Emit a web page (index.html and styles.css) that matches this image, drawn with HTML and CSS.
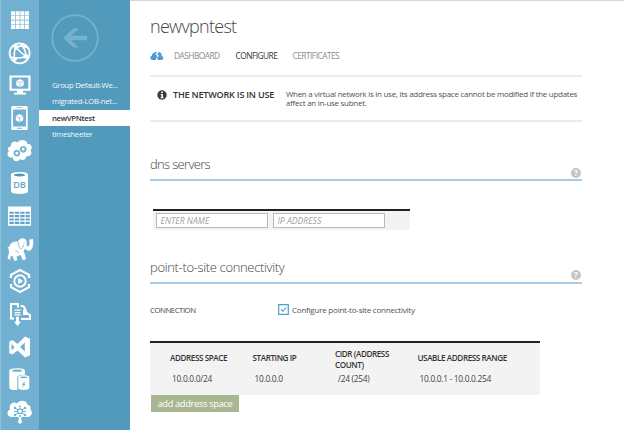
FILE: index.html
```html
<!DOCTYPE html>
<html lang="en">
<head>
<meta charset="utf-8">
<title>newvpntest</title>
<link rel="stylesheet" href="styles.css">
</head>
<body>
<div class="app">
  <nav class="rail">
    <svg viewBox="0 0 28 28"><path fill="none" stroke="#fff" stroke-width="4" stroke-dasharray="4 .65" d="M5 7.2h18M5 11.8h18M5 16.4h18M5 21h18"/></svg>
    <svg viewBox="0 0 28 28"><g fill="none" stroke="#fff"><circle cx="13.6" cy="14.3" r="10" stroke-width="1.8"/><path stroke-width="1.5" d="M10 8.5Q15 14 20 17.500M10 8.500Q7 14 9 21.500M4 18Q14 20 20 17.500M10 8.500Q16 5 21 9M20 17.500Q20 11 15 5"/></g><g fill="#fff"><circle cx="10" cy="8.500" r="2.400"/><circle cx="19.800" cy="17.500" r="2.400"/><circle cx="9" cy="20" r="2"/></g></svg>
    <svg viewBox="0 0 28 28"><path fill="#fff" fill-rule="evenodd" d="M3.500 4.500h21v15.300h-21zM5.700 6.500v11.200h16.600V6.500zM11 19.800h6v1.900h3v1.800H8v-1.800h3z"/><path fill="#fff" d="m14 8 3.700 1.900v4.400L14 16.300l-3.700-2V9.900z"/><path fill="none" stroke="#72b0d1" stroke-width=".6" d="m10.700 10.200 3.300 1.700 3.300-1.700M14 12v4"/></svg>
    <svg viewBox="0 0 28 28"><path fill="#fff" fill-rule="evenodd" d="M6.500 2h14q1.200 0 1.200 1.200v21.600q0 1.200-1.200 1.200h-14q-1.200 0-1.200-1.200V3.200Q5.300 2 6.500 2zM7 5.500v17h13v-17zM10.500 3.200v.8h6v-.8zM11 23.800v.9h5v-.9z"/><path fill="#fff" d="m13.500 10 3.700 1.900v4.400l-3.700 2-3.700-2v-4.400z"/><path fill="none" stroke="#72b0d1" stroke-width=".6" d="m10.200 12.200 3.300 1.700 3.300-1.700M13.500 14v4"/></svg>
    <svg viewBox="0 0 28 28"><path fill="#fff" d="M5 9.500C4 5 9 3 11.500 5.500 14 1.500 21 2.500 21.500 7c4-.5 5.500 4 3 6.300 2.500 3.200-.5 6.700-4 5.700-.5 4-4.500 5-6.500 3-2.500 4-7.500 2-7-1.500C2 21.500-.2 16.500 3 14c-2.500-1.500-.5-5 2-4.500z"/><g fill="none" stroke="#72b0d1"><circle cx="10.800" cy="16.200" r="2.300" stroke-width="1.700"/><circle cx="17.200" cy="12.300" r="2.300" stroke-width="1.700"/><circle cx="10.800" cy="16.200" r="3.300" stroke-width=".6" stroke-dasharray="1 1.300"/><circle cx="17.200" cy="12.300" r="3.300" stroke-width=".6" stroke-dasharray="1 1.300"/></g></svg>
    <svg viewBox="0 0 28 28"><path fill="#fff" d="M5 5.500C5 2.300 22 2.300 22 5.500v17c0 3.200-17 3.200-17 0z"/><ellipse cx="13.500" cy="6" rx="5.700" ry="1.500" fill="#519abb"/><text class="db" x="13.500" y="19" text-anchor="middle">DB</text></svg>
    <svg viewBox="0 0 28 28"><path fill="#fff" d="M2 4.500h23v19.300H2z"/><path fill="none" stroke="#5fa5c7" stroke-width="2.100" stroke-dasharray="4.400 1" d="M3.400 10.700h20.400M3.400 14.100h20.400M3.400 17.500h20.400M3.400 20.900h20.400"/></svg>
    <svg viewBox="0 0 28 28"><path fill="#fff" d="M1 12q2 .5 2.500-1C5 7 9 6.200 12 6.800 13 3 17.500 2.300 19.500 4.500c1.500 1 1 3.500 1.200 5.500 1.500 3 3.500 0 2.600-3.500l.2-2L27 4c.5 5 .2 10-3 11.500-2 1-4-.5-5-2l-1.500 3.300 1 1.200 1.500 6.500-3.200.5-2.300-5-2 .8-2 1 1 3.200-3 1-2-5-2.300.5L4.500 25l-3-1.500L3 17.500l-.5-4.300z"/><path fill="none" stroke="#72b0d1" stroke-width=".8" d="M12.300 7c-.5 3 .5 6 3 6.800q2-1.200 2.200-4M9.500 15q1 2 3.300 2.500"/><circle cx="18" cy="7.500" r=".6" fill="#72b0d1"/></svg>
    <svg viewBox="0 0 28 28"><g fill="none" stroke="#fff"><path stroke-width="2.200" d="M5 11V7.800l9-4.800 9 4.800V11M5 17v3.200l9 4.800 9-4.800V17"/><circle cx="14" cy="14" r="5.700" stroke-width="1.900"/></g><path fill="#fff" d="m12.200 10.800 5 3.200-5 3.200z"/></svg>
    <svg viewBox="0 0 28 28"><path fill="none" stroke="#fff" stroke-width="2" d="M8 18.500H5V4h7v3.500M14.500 6h2q3 1.500 3.500 6.500l4 2.500v4h-9M18 9.500v4.500h5"/><path fill="#fff" d="M8.500 9.500h6v1.300h-6zm0 2.400h6v1.300h-6zm0 2.400h6v1.300h-6zm1.500 2.500h3v5h2L11.500 26 8 21.800h2z"/></svg>
    <svg viewBox="0 0 28 28"><path fill="#fff" fill-rule="evenodd" d="m19 3.500 5 2.200v16.600l-5 2.200-7.500-7-5 4-3.200-1.300V8.400l3.200-1.300 5 4zM18.800 9.500 14 14l4.800 4.500zM5.500 11v6.500l3.200-3.300z"/></svg>
    <svg viewBox="0 0 28 28"><path fill="#fff" d="M3.300 5.500C3.300 2.500 19 2.500 19 5.500v4.200q-7.500-.5-7.700 3V25q-8 .5-8-2.500z"/><ellipse cx="11" cy="5.700" rx="5" ry="1.100" fill="#72b0d1"/><path fill="#fff" d="M12.300 12c0-2.200 11-2.200 11 0v11c0 2.500-11 2.500-11 0z"/><ellipse cx="17.700" cy="12.300" rx="3.700" ry=".9" fill="#72b0d1"/><path fill="#72b0d1" d="m19.500 16-4 3.700h2l-1.500 3 4-4h-2z"/></svg>
    <svg viewBox="0 0 28 28"><path fill="#fff" d="M5.500 19C1 19 0 13 4 11.500 2.500 6 7.500 2.500 11 5.500c3-4.500 10-3.300 10.500 1.300 3 .5 3.500 3 3 5 3 2.500 1 7.200-3 7.200h-6.200v3a2 2 0 1 1-2.600 0v-3z"/><g fill="none" stroke="#72b0d1"><circle cx="14" cy="13.300" r="2.400" stroke-width="1.300"/><path d="m9 10 3 2M19 10l-3 2M9 17l3-2M19 17l-3-2M8 13.500h3M17 13.500h3"/></g><g fill="#72b0d1"><circle cx="9" cy="10" r="1.200"/><circle cx="19" cy="10" r="1.200"/><circle cx="9" cy="17" r="1.200"/><circle cx="19" cy="17" r="1.200"/><circle cx="14" cy="8.500" r="1"/><circle cx="14" cy="18" r="1"/></g></svg>
  </nav>
  <aside class="side">
    <svg class="back" viewBox="0 0 50 50"><circle cx="25" cy="25" r="22.800" fill="none" stroke="#78b1cd" stroke-width="1.700"/><path fill="#78b1cd" d="M13 25 23.500 15.500h5.300L21 22.800h16.200v4.400H21l7.800 7.300h-5.300z"/></svg>
    <a class="net">Group Default-We...</a>
    <a class="net">migrated-LOB-net...</a>
    <a class="net active">newVPNtest</a>
    <a class="net">timesheeter</a>
  </aside>
  <main class="main">
    <h1>newvpntest</h1>
    <div class="tabs">
      <svg viewBox="0 0 14 10"><path fill="#4a9bd6" d="M5.800 9H2.600C.2 9-.6 5.800 1.800 4.800 2 2.600 3.500 1.500 5 1.200L7 .5 5.500 4l1.800.4zM8 9h3c2.700 0 3.100-3.300.7-4C12 2.500 10.500.8 8.500 1L7.300 3.700l1.800.8L7 6.800 8 9z"/></svg>
      <a class="t1">DASHBOARD</a><a class="t2">CONFIGURE</a><a class="t3">CERTIFICATES</a>
    </div>
    <section class="notice">
      <svg viewBox="0 0 10 10"><circle cx="5" cy="5" r="4.700" fill="#3c3c3c"/><path fill="#fff" d="M4.200 1.600h1.700v1.500H4.200zM3.700 4h2.200v3.300h.7v.9H3.600v-.9h.7V4.900h-.6z"/></svg>
      <strong>THE NETWORK IS IN USE</strong>
      <p>When a virtual network is in use, its address space cannot be modified if the updates<br>affect an in-use subnet.</p>
    </section>
    <div class="section dns"><h2>dns servers</h2><i class="help">?</i></div>
    <div class="dns-form"><div class="field">ENTER NAME</div><div class="field">IP ADDRESS</div></div>
    <div class="section p2s"><h2>point-to-site connectivity</h2><i class="help">?</i></div>
    <div class="connection">
      <span class="label">CONNECTION</span>
      <svg viewBox="0 0 11 11"><path fill="#fff" stroke="#4aa0cc" stroke-width="1.200" d="M.7.7h9.600v9.600H.7z"/><path fill="none" stroke="#4aa0cc" stroke-width="1.100" d="m3 5.500 1.900 1.800L8.300 3.500"/></svg>
      <span class="check-label">Configure point-to-site connectivity</span>
    </div>
    <div class="grid">
      <b>ADDRESS SPACE</b><b>STARTING IP</b><b class="h3">CIDR (ADDRESS<br>COUNT)</b><b>USABLE ADDRESS RANGE</b>
      <span>10.0.0.0/24</span><span>10.0.0.0</span><span class="d3">/24 (254)</span><span>10.0.0.1 - 10.0.0.254</span>
    </div>
    <div class="add">add address space</div>
  </main>
</div>
</body>
</html>
```
FILE: styles.css
```css
* { box-sizing: border-box; }
body { margin: 0; background: #fff; font-family: "Open Sans", sans-serif; color: #505050; overflow: hidden; }
.app { display: flex; width: 624px; height: 430px; white-space: nowrap; }

.rail { width: 39px; background: #72b0d1; border-left: 1px solid #8fc0da; padding: 4px 0 0 5px; display: flex; flex-direction: column; gap: 4.67px; }
.rail svg { width: 28px; height: 28px; flex: none; display: block; }
.rail svg:first-child { margin-top: 2px; }
.db { font-size: 9px; font-weight: 600; fill: #5fa5c7; }

.side { width: 91px; background: #519abb; display: flex; flex-direction: column; }
.back { width: 50px; height: 50px; margin: 13px 0 14px 11px; flex: none; }
.net { height: 16.300px; line-height: 16px; padding-left: 13px; font-size: 7.800px; letter-spacing: -0.33px; color: #f0f8fc; }
.net.active { background: #fff; color: #333; font-weight: 600; }

.main { flex: 1; border-top: 1px solid #d5d5dc; padding-left: 20px; }
h1, h2, p { margin: 0; font-weight: 300; }
h1 { height: 43px; padding-top: 13px; font-size: 18px; line-height: 24px; letter-spacing: -0.7px; color: #444; }
.tabs { display: flex; height: 31px; padding-top: 6px; font-size: 8.300px; line-height: 12px; letter-spacing: -0.5px; color: #8b8b8b; }
.tabs svg { width: 14px; height: 10px; margin: 1px 10px 0 0; }
.tabs a { flex: none; }
.t1 { width: 61.500px; }
.t2 { width: 57px; color: #333; }

.notice { width: 432px; height: 47px; border-top: 2px solid #ebebeb; border-bottom: 2px solid #ebebeb; display: flex; padding: 13px 0 0 7px; }
.notice svg { width: 10px; height: 10px; margin: 0 6px 0 0; flex: none; }
.notice strong { width: 113px; flex: none; font-size: 9.100px; line-height: 10px; font-weight: 600; letter-spacing: -0.22px; color: #333; }
.notice p { font-size: 7.900px; line-height: 9px; letter-spacing: -0.23px; font-weight: 400; }

.section { width: 432px; display: flex; justify-content: space-between; border-bottom: 2px solid #a6cdeb; }
.section h2 { font-size: 13px; line-height: 18px; color: #444; }
.help { width: 10px; height: 10px; border-radius: 50%; background: #c4c4c4; color: #fff; font: 700 8px/10px "Open Sans", sans-serif; text-align: center; margin-right: 1px; }
.dns { height: 26px; margin-top: 33px; }
.dns h2 { letter-spacing: -0.67px; }
.dns .help, .p2s .help { margin-top: 13px; }
.dns-form { width: 257px; height: 21px; margin: 28px 0 0 3px; border-top: 2px solid #222; background: #f3f3f3; display: flex; padding: 2px 0 0 3px; gap: 5px; }
.field { width: 112px; height: 15px; border: 1px solid #b9b9b9; background: #fff; font-size: 8.600px; line-height: 14px; font-style: italic; color: #a0a0a0; padding-left: 3.500px; }
.p2s { height: 27px; margin-top: 27px; }
.p2s h2 { padding-top: 1px; letter-spacing: -0.35px; }

.connection { display: flex; margin-top: 20px; height: 12px; font-size: 8px; line-height: 12px; }
.connection svg { width: 11px; height: 11px; margin-right: 3px; flex: none; }
.label { width: 128px; font-size: 7.800px; letter-spacing: -0.48px; color: #444; }
.check-label { letter-spacing: -0.22px; }

.grid { width: 390px; height: 54px; margin-top: 25px; border-top: 2px solid #222; background: #f3f3f3; display: grid; grid-template-columns: 82.500px 82.500px 82.500px 1fr; grid-template-rows: 29px 16px; align-content: start; align-items: center; padding-left: 20px; font-size: 8.400px; letter-spacing: -0.3px; }
.grid b { font-size: 8.100px; line-height: 11px; font-weight: 600; letter-spacing: -0.4px; color: #333; }
.grid b.h3 { padding-top: 2px; }
.grid span { padding-left: 2px; color: #444; line-height: 12px; margin-top: -2px; }
.grid .d3 { padding-left: 3px; margin-top: -3px; }
.add { width: 88px; height: 17px; margin-left: 1px; background: #a8b791; color: #fff; font-size: 9.300px; line-height: 17px; letter-spacing: -0.35px; padding-left: 6.500px; }
```
